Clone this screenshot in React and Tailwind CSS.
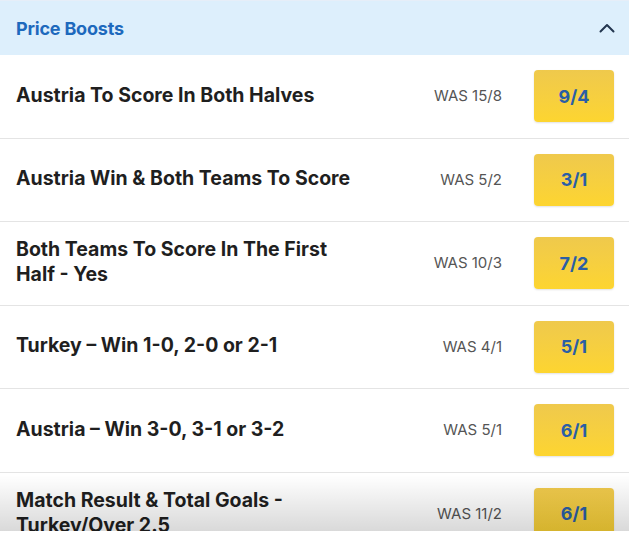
import React from "react";

const rows = [
  { title: "Austria To Score In Both Halves", was: "15/8", price: "9/4" },
  { title: "Austria Win & Both Teams To Score", was: "5/2", price: "3/1" },
  { title: "Both Teams To Score In The First Half - Yes", was: "10/3", price: "7/2" },
  { title: "Turkey – Win 1-0, 2-0 or 2-1", was: "4/1", price: "5/1" },
  { title: "Austria – Win 3-0, 3-1 or 3-2", was: "5/1", price: "6/1" },
  { title: "Match Result & Total Goals - Turkey/Over 2.5", was: "11/2", price: "6/1" },
];

export default function App() {
  return (
    <div className="w-[629px] h-[538px] bg-white" style={{ fontFamily: "Inter, 'Noto Sans', sans-serif" }}>
      <div className="relative h-[531px] overflow-hidden">
        <div className="h-[55px] bg-[#ddeffc] border-t border-[#e6eef8] flex items-center justify-between pl-[16px] pr-[14px]">
          <span className="text-[18px] font-bold text-[#1d69bd] tracking-[-0.2px]">Price Boosts</span>
          <svg width="16" height="10" viewBox="0 0 16 10" fill="none">
            <path d="M1.5 8.5 L8 2 L14.5 8.5" stroke="#23364f" strokeWidth="2" strokeLinecap="round" strokeLinejoin="round" />
          </svg>
        </div>
        {rows.map((r, i) => (
          <div key={i} className="h-[83.5px] border-b border-[#e4e4e4] flex items-center pl-[16px] pr-[15px]">
            <div className="w-[342px] text-[19.5px] leading-[25px] font-bold text-[#1f1f1f] -mt-[2px]">{r.title}</div>
            <div className="ml-auto text-[15px] text-[#555555] mr-[32px]">WAS {r.was}</div>
            <div className="w-[80px] h-[52px] rounded-[4px] bg-gradient-to-b from-[#efc94c] to-[#fdd52f] shadow-[0_1px_2px_rgba(0,0,0,0.12)] flex items-center justify-center text-[18px] font-bold text-[#2a5ea6]">
              {r.price}
            </div>
          </div>
        ))}
        <div className="absolute left-0 right-0 bottom-0 h-[56px] bg-gradient-to-b from-transparent to-[rgba(0,0,0,0.15)] pointer-events-none" />
      </div>
    </div>
  );
}
